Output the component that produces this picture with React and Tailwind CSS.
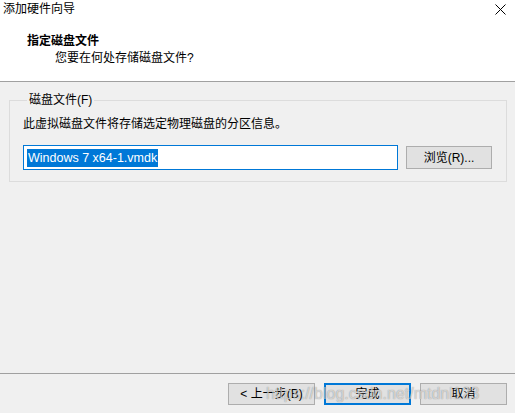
import React from 'react';

const font = "font-['Segoe_UI','Liberation_Sans','Noto_Sans_CJK_SC',sans-serif]";

function Btn({ children, primary }) {
  return (
    <button
      className={
        'w-[87px] h-[22px] bg-[#e1e1e1] text-[12px] leading-[16px] text-black flex items-center justify-center ' +
        (primary ? 'border-2 border-[#0078d7]' : 'border border-[#adadad]')
      }
    >
      {children}
    </button>
  );
}

export default function App() {
  return (
    <div className={`relative w-[515px] h-[413px] flex flex-col bg-[#f0f0f0] overflow-hidden ${font}`}>
      {/* Header */}
      <div className="h-[81px] bg-white relative shrink-0">
        <div className="pl-[3px] pt-[1px] text-[12px] leading-[16px] text-black">添加硬件向导</div>
        <svg className="absolute left-[495px] top-[4px]" width="11" height="11" viewBox="0 0 11 11">
          <path d="M0.5 0.5 L10.5 10.5 M10.5 0.5 L0.5 10.5" stroke="#000" strokeWidth="1" />
        </svg>
        <div className="pl-[27px] mt-[16px] text-[12px] leading-[16px] font-bold text-black">指定磁盘文件</div>
        <div className="pl-[55px] mt-[1px] text-[12px] leading-[16px] text-black">您要在何处存储磁盘文件?</div>
      </div>
      <div className="h-px bg-[#a0a0a0] shrink-0" />

      {/* Body */}
      <div className="flex-1 pt-[10px] pl-[9px] pr-[9px]">
        <fieldset className="border border-[#dcdcdc] pl-[13px] pr-[14px] pt-[8px] pb-[11px]">
          <legend className="ml-[4px] px-[2px] text-[12px] leading-[16px] text-black">磁盘文件(F)</legend>
          <div className="text-[12px] leading-[16px] text-black">此虚拟磁盘文件将存储选定物理磁盘的分区信息。</div>
          <div className="mt-[13px] flex items-center gap-[8px]">
            <div className="w-[375px] h-[25px] border border-[#0078d7] bg-white flex items-center px-[3px]">
              <span className="bg-[#0078d7] text-white text-[12.5px] leading-[18px] px-[1px]">Windows 7 x64-1.vmdk</span>
            </div>
            <button className="w-[86px] h-[23px] bg-[#e1e1e1] border border-[#adadad] text-[12px] leading-[16px] text-black">
              浏览(R)...
            </button>
          </div>
        </fieldset>
      </div>

      <div className="h-px bg-[#a0a0a0] shrink-0" />
      {/* Footer */}
      <div className="h-[39px] shrink-0 flex justify-end items-start pt-[9px] pr-[8px] gap-[9px]">
        <Btn>&lt; 上一步(B)</Btn>
        <Btn primary>完成</Btn>
        <Btn>取消</Btn>
      </div>

      {/* watermark */}
      <span className="absolute left-[266px] top-[384px] text-[16px] leading-[20px] text-white/60 [text-shadow:0_0_1px_rgba(0,0,0,0.45)] pointer-events-none font-['Liberation_Sans',sans-serif]">
        https://blog.csdn.net/mtdnl123
      </span>
    </div>
  );
}
